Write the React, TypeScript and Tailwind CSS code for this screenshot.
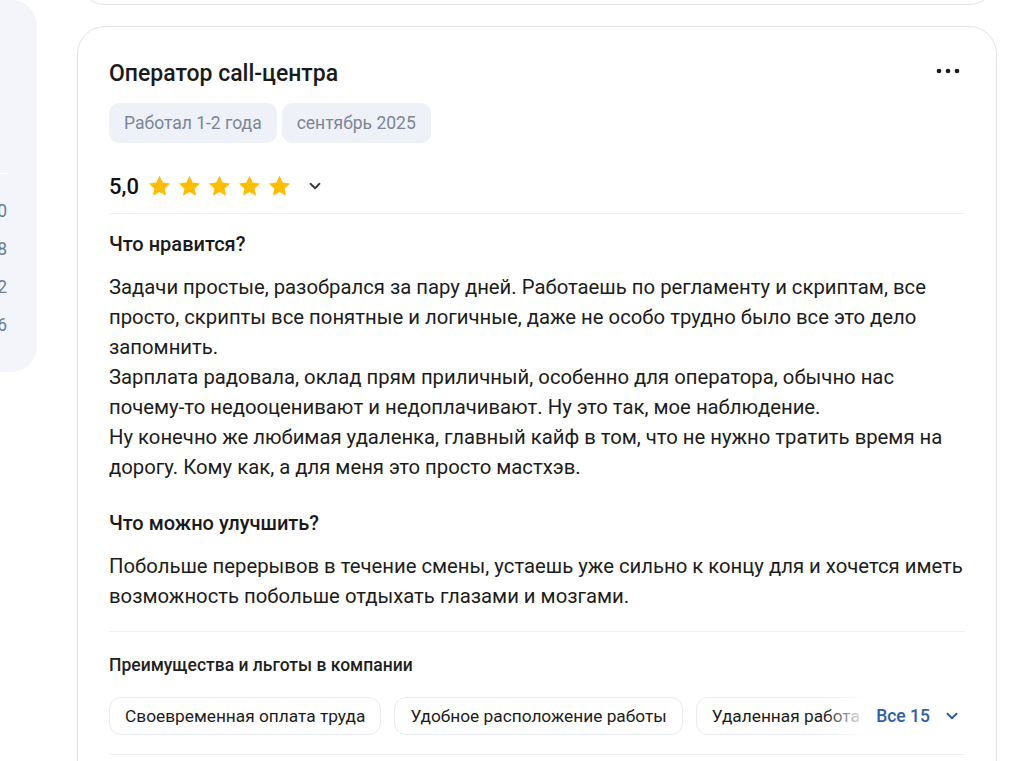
import { ChevronDown } from "lucide-react";

const counts = ["0", "8", "2", "6"];
const benefits = [
  "Своевременная оплата труда",
  "Удобное расположение работы",
  "Удаленная работа",
];

function Star() {
  return (
    <svg width="23" height="22" viewBox="0 0 24 23" className="shrink-0">
      <path
        d="M12 0.8l3.3 7.1 7.8 0.9-5.8 5.3 1.6 7.7L12 17.9l-6.9 3.9 1.6-7.7L0.9 8.8l7.8-0.9z"
        fill="#ffbd00"
      />
    </svg>
  );
}

function Sidebar() {
  return (
    <aside className="h-[372px] w-[37px] shrink-0 overflow-hidden rounded-r-[26px] bg-[#f3f5fa]">
      <div className="flex flex-col items-end pr-[30px] pt-[173px]">
        <div className="h-px w-[40px] bg-white" />
        <ul className="mt-[18px] text-right text-[17.5px] leading-[38px] text-[#6c7a96]">
          {counts.map((c, i) => (
            <li key={i}>{c}</li>
          ))}
        </ul>
      </div>
    </aside>
  );
}

function Review() {
  return (
    <article className="mt-[21px] rounded-[28px] border border-[#dfe3ec] bg-white px-[31px] pt-[31px]">
      <div className="flex items-start justify-between">
        <h2 className="text-[23px] leading-8 font-medium text-[#1a1a1a]">
          Оператор call-центра
        </h2>
        <button className="mr-[4px] mt-px text-[#1a1a1a]">
          <svg width="26" height="24" viewBox="0 0 26 24">
            <circle cx="4" cy="12" r="2.3" fill="currentColor" />
            <circle cx="13" cy="12" r="2.3" fill="currentColor" />
            <circle cx="22" cy="12" r="2.3" fill="currentColor" />
          </svg>
        </button>
      </div>

      <div className="mt-[13px] flex gap-[5px]">
        <span className="rounded-[10px] bg-[#eef1f7] px-[15px] text-[17.5px] leading-[40px] text-[#7b8598]">
          Работал 1-2 года
        </span>
        <span className="rounded-[10px] bg-[#eef1f7] px-[15px] text-[17.5px] leading-[40px] text-[#7b8598]">
          сентябрь 2025
        </span>
      </div>

      <div className="mt-[27px] flex h-8 items-center">
        <span className="text-[22px] font-medium text-[#111]">5,0</span>
        <div className="ml-[9px] flex gap-[7px]">
          {[0, 1, 2, 3, 4].map((i) => (
            <Star key={i} />
          ))}
        </div>
        <ChevronDown
          size={18}
          strokeWidth={2.4}
          className="ml-[15px] text-[#3a3a3a]"
        />
      </div>

      <div className="mt-[11px] h-px bg-[#eef0f4]" />

      <h3 className="mt-[17px] text-[20px] leading-[26px] font-medium text-[#1a1a1a]">
        Что нравится?
      </h3>
      <p className="mt-[15px] whitespace-pre-line text-[20.3px] leading-[30px] text-[#1c1c1c]">
        {
          "Задачи простые, разобрался за пару дней. Работаешь по регламенту и скриптам, все просто, скрипты все понятные и логичные, даже не особо трудно было все это дело запомнить.\nЗарплата радовала, оклад прям приличный, особенно для оператора, обычно нас почему-то недооценивают и недоплачивают. Ну это так, мое наблюдение.\nНу конечно же любимая удаленка, главный кайф в том, что не нужно тратить время на дорогу. Кому как, а для меня это просто мастхэв."
        }
      </p>

      <h3 className="mt-[28px] text-[20px] leading-[26px] font-medium text-[#1a1a1a]">
        Что можно улучшить?
      </h3>
      <p className="mt-[15px] text-[20.3px] leading-[30px] text-[#1c1c1c]">
        Побольше перерывов в течение смены, устаешь уже сильно к концу для и
        хочется иметь возможность побольше отдыхать глазами и мозгами.
      </p>

      <div className="mt-5 h-px bg-[#eef0f4]" />

      <h4 className="mt-[22px] text-[17.5px] leading-[22px] font-medium text-[#1f1f1f]">
        Преимущества и льготы в компании
      </h4>
      <div className="mt-[21px] flex items-center">
        <div className="relative flex min-w-0 flex-1 gap-[13px] overflow-hidden">
          {benefits.map((b) => (
            <span
              key={b}
              className="shrink-0 rounded-[12px] border border-[#e8ebf1] px-[15px] text-[17.3px] leading-[36px] whitespace-nowrap text-[#1c1c1c]"
            >
              {b}
            </span>
          ))}
          <div className="absolute inset-y-0 right-0 w-[42px] bg-gradient-to-r from-white/0 to-white" />
        </div>
        <button className="ml-[10px] flex shrink-0 items-center gap-[13px] text-[17.5px] font-medium text-[#2f5fa7]">
          Все 15
          <ChevronDown size={18} strokeWidth={2.6} className="mr-[4px]" />
        </button>
      </div>
      <div className="mt-[19px] h-px bg-[#eef0f4]" />
      <div className="h-10" />
    </article>
  );
}

export default function App() {
  return (
    <div className="flex h-[761px] gap-[40px] overflow-hidden bg-white font-['Roboto',sans-serif]">
      <Sidebar />
      <main className="w-[920px] shrink-0">
        <div className="-mt-[55px] h-[60px] rounded-[28px] border border-[#dfe3ec] bg-white" />
        <Review />
      </main>
    </div>
  );
}
